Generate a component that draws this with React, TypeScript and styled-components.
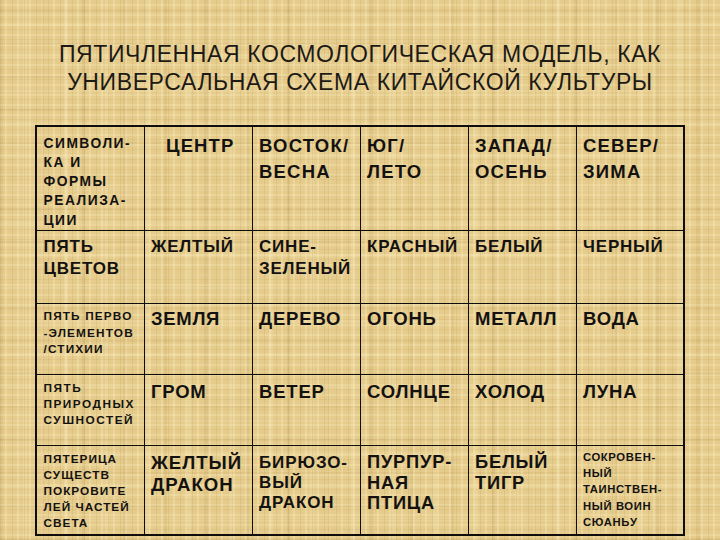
import React from 'react'
import styled, { createGlobalStyle } from 'styled-components'

const GlobalStyle = createGlobalStyle`
    html, body {
        margin: 0;
        padding: 0;
    }
    body {
        font-family: "Liberation Sans", Arial, sans-serif;
        color: #141210;
    }
`

// parchment: base colour plus a few woven fibre layers of different periods
const Page = styled.div`
    width: 720px;
    height: 540px;
    overflow: hidden;
    box-sizing: border-box;
    padding-top: 40px;
    background-color: #e6cc8c;
    background-image:
        repeating-linear-gradient(90deg, rgba(140, 100, 35, 0.10) 0 1px, transparent 1px 5px, rgba(255, 244, 200, 0.26) 5px 7px, transparent 7px 12px),
        repeating-linear-gradient(0deg, rgba(140, 100, 35, 0.08) 0 1px, transparent 1px 4px, rgba(255, 244, 200, 0.22) 4px 6px, transparent 6px 10px),
        repeating-linear-gradient(90deg, rgba(120, 85, 25, 0.08) 0 3px, transparent 3px 23px, rgba(255, 246, 210, 0.16) 23px 27px, transparent 27px 41px),
        repeating-linear-gradient(0deg, rgba(120, 85, 25, 0.07) 0 2px, transparent 2px 19px, rgba(255, 246, 210, 0.14) 19px 22px, transparent 22px 33px);
`

const Title = styled.h1`
    margin: 0;
    font-size: 23px;
    font-weight: normal;
    line-height: 28px;
    letter-spacing: 0.6px;
    text-align: center;
    color: #1d1a16;
`

const Table = styled.table`
    margin: 29px 0 0 35px;
    width: 648px;
    table-layout: fixed;
    border-collapse: collapse;
    border: 2px solid #100e0c;
`

const Row = styled.tr<{ $h: number }>`
    height: ${({ $h }) => $h}px;
`

const Cell = styled.td<{ $size: number, $lh: number, $pt: number, $center?: boolean, $ls: number }>`
    border: 1.5px solid #100e0c;
    vertical-align: top;
    padding: ${({ $pt }) => $pt}px 2px 0 6.5px;
    font-weight: bold;
    font-size: ${({ $size }) => $size}px;
    line-height: ${({ $lh }) => $lh}px;
    letter-spacing: ${({ $ls }) => $ls}px;
    text-align: ${({ $center }) => $center ? 'center' : 'left'};
    white-space: nowrap;
    overflow: hidden;
`

const Line = styled.div``

type CellData = {
    lines: string[]
    size: number
    lh: number
    pt: number
    ls: number
    center?: boolean
}

type RowData = {
    height: number
    cells: CellData[]
}

const COLUMNS = [108, 108, 108, 108, 108, 108]

const cell = (lines: string[], size: number, lh: number, pt: number, ls: number): CellData => ({ lines, size, lh, pt, ls })

const rows: RowData[] = [
    {
        height: 103,
        cells: [
            cell(['СИМВОЛИ-', 'КА И', 'ФОРМЫ', 'РЕАЛИЗА-', 'ЦИИ'], 13.8, 19.2, 6.7, 1.5),
            { ...cell(['ЦЕНТР'], 18.5, 26.7, 5.5, 1.1), center: true },
            cell(['ВОСТОК/', 'ВЕСНА'], 18.5, 26.7, 5.5, 1.2),
            cell(['ЮГ/', 'ЛЕТО'], 18.5, 26.7, 5.5, 1.2),
            cell(['ЗАПАД/', 'ОСЕНЬ'], 18.5, 26.7, 5.5, 1.2),
            cell(['СЕВЕР/', 'ЗИМА'], 18.5, 26.7, 5.5, 1.2),
        ],
    },
    {
        height: 73,
        cells: [
            cell(['ПЯТЬ', 'ЦВЕТОВ'], 17, 21.7, 5.7, 0.8),
            cell(['ЖЕЛТЫЙ'], 17, 21.7, 5.3, 0.8),
            cell(['СИНЕ-', 'ЗЕЛЕНЫЙ'], 17, 21.7, 5.7, 0.8),
            cell(['КРАСНЫЙ'], 17, 21.7, 5.3, 0.8),
            cell(['БЕЛЫЙ'], 17, 21.7, 5.3, 0.8),
            cell(['ЧЕРНЫЙ'], 17, 21.7, 5.3, 0.8),
        ],
    },
    {
        height: 71,
        cells: [
            cell(['ПЯТЬ ПЕРВО', '-ЭЛЕМЕНТОВ', '/СТИХИИ'], 11.8, 16.2, 4.7, 1.15),
            cell(['ЗЕМЛЯ'], 18.5, 24, 3.4, 0.7),
            cell(['ДЕРЕВО'], 18.5, 24, 3.4, 0.8),
            cell(['ОГОНЬ'], 18.5, 24, 3.4, 0.8),
            cell(['МЕТАЛЛ'], 18.5, 24, 3.4, 0.8),
            cell(['ВОДА'], 18.5, 24, 3.4, 0.8),
        ],
    },
    {
        height: 71,
        cells: [
            cell(['ПЯТЬ', 'ПРИРОДНЫХ', 'СУШНОСТЕЙ'], 11.8, 15.8, 6.3, 1.5),
            cell(['ГРОМ'], 18.5, 24, 4.8, 0.8),
            cell(['ВЕТЕР'], 18.5, 24, 4.8, 0.8),
            cell(['СОЛНЦЕ'], 18.5, 24, 4.8, 0.8),
            cell(['ХОЛОД'], 18.5, 24, 4.8, 0.8),
            cell(['ЛУНА'], 18.5, 24, 4.8, 0.8),
        ],
    },
    {
        height: 90,
        cells: [
            cell(['ПЯТЕРИЦА', 'СУЩЕСТВ', 'ПОКРОВИТЕ', 'ЛЕЙ ЧАСТЕЙ', 'СВЕТА'], 11.8, 16, 5.2, 1),
            cell(['ЖЕЛТЫЙ', 'ДРАКОН'], 18.6, 21.7, 6.5, 1.0),
            cell(['БИРЮЗО-', 'ВЫЙ', 'ДРАКОН'], 17, 20, 7, 0.9),
            cell(['ПУРПУР-', 'НАЯ', 'ПТИЦА'], 18.3, 20.3, 6.5, 0.8),
            cell(['БЕЛЫЙ', 'ТИГР'], 18.3, 20.3, 6.5, 0.8),
            cell(['СОКРОВЕН-', 'НЫЙ', 'ТАИНСТВЕН-', 'НЫЙ ВОИН', 'СЮАНЬУ'], 11.3, 16.3, 3.2, 0.6),
        ],
    },
]

const App = () => {
    return (
        <Page>
            <GlobalStyle />
            <Title>
                ПЯТИЧЛЕННАЯ КОСМОЛОГИЧЕСКАЯ МОДЕЛЬ, КАК<br />
                УНИВЕРСАЛЬНАЯ СХЕМА КИТАЙСКОЙ КУЛЬТУРЫ
            </Title>
            <Table>
                <colgroup>
                    {COLUMNS.map((w, i) => <col key={i} style={{ width: w }} />)}
                </colgroup>
                <tbody>
                    {rows.map((row, r) => (
                        <Row key={r} $h={row.height}>
                            {row.cells.map((c, i) => (
                                <Cell
                                    key={i}
                                    $size={c.size}
                                    $lh={c.lh}
                                    $pt={c.pt}
                                    $ls={c.ls}
                                    $center={c.center}
                                >
                                    {c.lines.map((line, l) => <Line key={l}>{line}</Line>)}
                                </Cell>
                            ))}
                        </Row>
                    ))}
                </tbody>
            </Table>
        </Page>
    )
}

export default App
